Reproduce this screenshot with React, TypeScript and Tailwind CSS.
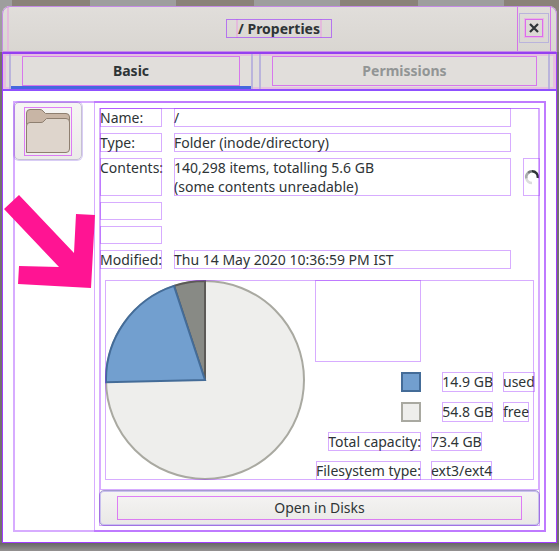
import type { ReactNode } from "react";

const frame = "outline-1 -outline-offset-1 outline-[#9b30ff]/40";
const pinkFrame = "outline-1 -outline-offset-1 outline-[#d030f8]/60";

function TabButton({ label, active }: { label: string; active?: boolean }) {
  return (
    <button
      type="button"
      role="tab"
      aria-selected={!!active}
      className={
        "flex h-full flex-col border-x-2 border-[#bab4dc] px-[11px] " +
        (active
          ? "w-[244px] text-[#2e3436] shadow-[inset_0_-3px_#4468de]"
          : "flex-1 text-[#929595]")
      }
    >
      <span className={"mt-[2px] flex h-[30px] w-full items-start justify-center pt-[5px] " + pinkFrame}>
        {label}
      </span>
    </button>
  );
}

function Property({ name, children, extra }: { name: string; children?: ReactNode; extra?: ReactNode }) {
  return (
    <>
      <dt className={frame + " min-h-[18px]"}>{name}</dt>
      {children ? <dd className={frame}>{children}</dd> : <dd />}
      {extra ?? <dd />}
    </>
  );
}

function Spinner() {
  return (
    <dd className={"flex items-center justify-center " + frame}>
      <svg viewBox="0 0 16 16" className="size-4" fill="none" strokeWidth="2.6" aria-label="Counting">
        <path d="M2.4 9.5A5.8 5.8 0 0 0 8 14" stroke="#dcdddd" />
        <path d="M4 4A5.8 5.8 0 0 0 2.4 9.5" stroke="#a9acad" />
        <path d="M8 2.2A5.8 5.8 0 0 0 4 4" stroke="#747879" />
        <path d="M8 2.2A5.8 5.8 0 0 1 13.8 9" stroke="#2e3436" />
      </svg>
    </dd>
  );
}

function UsagePie() {
  return (
    <svg viewBox="0 0 200 200" className="size-[200px] shrink-0" strokeWidth="2" role="img" aria-label="Disk usage">
      <circle cx="100" cy="100" r="99" fill="#eeeeec" stroke="#a9a9a1" />
      <path d="M100 100L69 5.900A99 99 0 0 1 100 1Z" fill="#888a85" stroke="#5c5a57" />
      <path d="M100 100L1 102.200A99 99 0 0 1 69 5.900Z" fill="#729fcf" stroke="#446c98" />
    </svg>
  );
}

export default function App() {
  return (
    <div className="bg-[#737170] font-['Noto_Sans','Open_Sans',sans-serif] text-[14px] leading-[19px] text-[#2e3436]">
      <div className="bg-[repeating-linear-gradient(90deg,#9e9e9e_0_12px,#8a8279_12px_90px,#9e9e9e_90px_164px)] px-[2px] pt-[6px]">
        <header className="flex h-[46px] items-stretch rounded-t-lg bg-linear-to-b from-[#e1dedb] to-[#d9d6d1] outline-1 -outline-offset-1 outline-[#c58be6]">
          <div className="ml-[5px] w-[34px] border-l-2 border-[#e4bbdc]" />
          <div className="flex flex-1 items-center justify-center pb-[2px]">
            <h1 className={"px-[10px] text-[14px] font-bold outline-1 -outline-offset-1 outline-[#9b30ff]/60"}>
              <span className="block border-x-2 border-[#e4bbdc]">/ Properties</span>
            </h1>
          </div>
          <div className={"mr-[6px] flex w-[34px] items-center justify-center pb-[2px] " + pinkFrame}>
            <button
              type="button"
              aria-label="Close"
              className="flex size-[30px] items-center justify-center outline-1 -outline-offset-1 outline-[#b9b3dc]"
            >
              <span className="flex size-4 items-center justify-center outline-1 outline-[#dc6cec] shadow-[0_0_0_2px_#e8b4e4]">
                <svg viewBox="0 0 10 10" className="size-[10px]" stroke="#2e3436" strokeWidth="2.200">
                  <path d="M1 1L9 9M9 1L1 9" />
                </svg>
              </span>
            </button>
          </div>
        </header>
      </div>

      <main className="relative mx-[2px] border-x border-b border-[#a03cff] bg-white">
        <div
          role="tablist"
          className="flex h-[39px] border-b-2 border-t-2 border-b-[#8f50ff] border-t-[#9440f0] bg-[#e1dedb] px-[6px] font-bold shadow-[inset_0_2px_#e6bfe0,inset_0_-2px_#e6bfe0,inset_3px_0_#e6bfe0,inset_-3px_0_#e6bfe0]"
        >
          <TabButton label="Basic" active />
          <div className="w-[6px]" />
          <TabButton label="Permissions" />
        </div>

        <div className="p-[10px]">
          <div className="flex outline-2 -outline-offset-2 outline-[#9b30ff]/40">
            <div className="w-[81px] shrink-0 pl-px pt-px">
              <button
                type="button"
                aria-label="Change icon"
                className="flex h-[58px] w-[68px] justify-center rounded-[5px] border border-[#c5c0d4] bg-linear-to-b from-[#f6f5f4] to-[#ecebe9] pt-1 shadow-[0_0_0_1px_#d9cdf5]"
              >
                <span className={"h-[49px] w-12 shrink-0 " + pinkFrame}>
                  <svg viewBox="0 0 48 49" className="h-[49px] w-12" stroke="#8e7f70" strokeWidth="1">
                    <path d="M2.500 20V6Q2.500 2.500 6 2.500H16Q18 2.500 19 4L21.500 6.500H42Q45.500 6.500 45.500 10V20Z" fill="#c8b5a5" />
                    <path d="M2.500 45.500V19Q2.500 15.500 6 15.500H17Q19 15.500 20 14L22.500 11.500H42Q45.500 11.500 45.500 15V42Q45.500 45.500 42 45.500Z" fill="#ded5cc" />
                  </svg>
                </span>
              </button>
            </div>

            <div className="min-w-0 flex-1 border-y-2 border-l border-r-2 border-[#9b30ff]/40 px-1 pb-1 pt-[5px]">
              <div className={frame}>
                <div className={"mx-px pb-[10px] " + frame}>
                  <dl className="-mr-px grid grid-cols-[62px_1fr_17px] gap-x-3 gap-y-1.5">
                    <Property name="Name:">/</Property>
                    <Property name="Type:">Folder (inode/directory)</Property>
                    <Property name="Contents:" extra={<Spinner />}>
                      140,298 items, totalling 5.6 GB
                      <br />
                      (some contents unreadable)
                    </Property>
                    <Property name="" />
                    <Property name="" />
                    <Property name="Modified:">Thu 14 May 2020 10:36:59 PM IST</Property>
                  </dl>

                  <div className={"mx-[5px] mt-[11px] flex gap-[10px] " + frame}>
                    <UsagePie />
                    <div className="grid grid-cols-[106px_62px_31px] content-start items-start gap-[10px] whitespace-nowrap">
                      <div className={"h-[82px] " + frame} />
                      <div className="col-span-2" />

                      <span className="size-5 justify-self-end border-2 border-[#446c98] bg-[#729fcf]" />
                      <span className={"h-5 justify-self-end " + frame}>14.9 GB</span>
                      <span className={"h-5 justify-self-start " + frame}>used</span>

                      <span className="size-5 justify-self-end border-2 border-[#a9a9a1] bg-[#eeeeec]" />
                      <span className={"h-5 justify-self-end " + frame}>54.8 GB</span>
                      <span className={"h-5 justify-self-start " + frame}>free</span>

                      <span className={"justify-self-end " + frame}>Total capacity:</span>
                      <span className={"col-span-2 justify-self-start " + frame}>73.4 GB</span>

                      <span className={"justify-self-end " + frame}>Filesystem type:</span>
                      <span className={"col-span-2 justify-self-start " + frame}>ext3/ext4</span>
                    </div>
                  </div>
                </div>

                <button
                  type="button"
                  className="flex h-9 w-full items-start rounded-[5px] border border-[#a59ccf] bg-linear-to-b from-[#f6f5f4] to-[#e9e8e6] px-[17px] pt-[5px] shadow-[inset_0_0_0_1px_#c9c0ee]"
                >
                  <span className={"flex h-6 w-full items-start justify-center pt-[2px] " + pinkFrame}>Open in Disks</span>
                </button>
              </div>
            </div>
          </div>
        </div>

        <svg
          viewBox="0 0 92 94"
          className="pointer-events-none absolute left-0 top-[142px] h-[94px] w-[92px]"
          fill="#ff1493"
          aria-hidden="true"
        >
          <path d="M16 1L71 59L73 20L92 21L88 94L15 90L16 72L56 73L1 15Z" />
        </svg>
      </main>
      <div className="h-2 bg-linear-to-b from-[#676665] to-[#959292]" />
    </div>
  );
}
